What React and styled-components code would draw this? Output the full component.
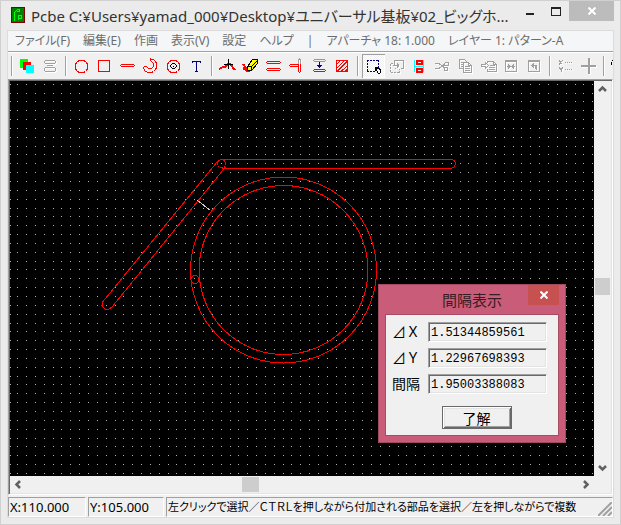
import React from "react";
import styled, { createGlobalStyle, css } from "styled-components";

const UI_FONT = '"Noto Sans", "Noto Sans CJK JP", sans-serif';
const FACE = "#f0f0f0";
const SHADOW = "#a0a0a0";
const DARK = "#696969";
const LIGHT = "#e3e3e3";
const RED = "#ff0000";
const NAVY = "#000080";

const GlobalStyle = createGlobalStyle`
  * { box-sizing: border-box; }
  body { margin: 0; font-family: ${UI_FONT}; color: #000; }
  button { font-family: inherit; border: 0; padding: 0; margin: 0; background: none; color: inherit; }
  svg { display: block; }
`;

const Window = styled.div`
  position: relative;
  display: flex;
  flex-direction: column;
  height: 100vh;
  background: #ebebeb;
  box-shadow: inset 0 0 0 1px #d0d0d0;
  overflow: hidden;
`;

const TitleBar = styled.header`
  display: flex;
  align-items: flex-start;
  height: 31px;
  padding: 1px 7px 0 11px;
`;

const AppIcon = styled.svg`
  flex: none;
  margin-top: 6px;
`;

const Title = styled.h1`
  flex: 1;
  min-width: 0;
  margin: 0 0 0 6px;
  overflow: hidden;
  font-size: 15px;
  font-weight: 400;
  line-height: 30px;
  white-space: nowrap;
  color: #333;
  font-feature-settings: "palt";
`;

const CaptionButton = styled.button`
  display: flex;
  flex: none;
  align-items: center;
  justify-content: center;
  width: ${(p) => (p.$wide ? 45 : 26)}px;
  height: 20px;
  background: ${(p) => (p.$wide ? "#bcbcbc" : "transparent")};
`;

const Client = styled.main`
  display: flex;
  flex: 1;
  flex-direction: column;
  min-height: 0;
  margin: 0 8px 8px;
  background: ${FACE};
  box-shadow: 0 0 0 1px #dcdcdc;
`;

const MenuBar = styled.nav`
  display: flex;
  flex: none;
  gap: 13px;
  height: 20px;
  padding-left: 7px;
  overflow: hidden;
  background: #f5f6f7;
`;

const MenuItem = styled.button`
  flex: none;
  font-size: 12px;
  line-height: 20px;
  white-space: nowrap;
  color: #6d6d6d;
  font-feature-settings: "palt";
`;

const ToolBar = styled.div`
  display: flex;
  flex: none;
  align-items: flex-start;
  height: 28px;
  padding-top: 2px;
  overflow: hidden;
  border-top: 1px solid ${SHADOW};
  box-shadow: inset 0 1px 0 #fff;
`;

const ToolSeparator = styled.span`
  flex: none;
  width: 2px;
  height: 20px;
  margin: 2px 3px 0;
  background: ${SHADOW};
  border-right: 1px solid #fff;
`;

const ToolButton = styled.button`
  flex: none;
  width: 23px;
  height: 24px;
  ${(p) =>
    p.$pressed &&
    css`
      background: repeating-conic-gradient(#fff 0 25%, #f0f0f0 0 50%) 0 0 / 2px 2px;
      box-shadow: inset 1px 1px 0 ${SHADOW}, inset -1px -1px 0 #fff;
    `}
`;

const Viewport = styled.section`
  display: grid;
  flex: 1;
  grid-template: minmax(0, 1fr) 17px / minmax(0, 1fr) 17px;
  min-height: 0;
  border: 1px solid ${SHADOW};
  border-right-color: #fff;
  border-bottom-color: #fff;
  box-shadow: inset 1px 1px 0 ${DARK}, inset -1px -1px 0 ${LIGHT};
  padding: 1px;
`;

const Board = styled.svg`
  width: 100%;
  height: 100%;
  background: #000;
`;

const ScrollTrack = styled.div`
  display: flex;
  flex-direction: ${(p) => (p.$vertical ? "column" : "row")};
  background: ${FACE};
`;

const ScrollButton = styled.button`
  display: flex;
  flex: none;
  align-items: center;
  justify-content: center;
  width: 17px;
  height: 17px;
`;

const ScrollGap = styled.span`
  flex: ${(p) => p.$share} 0 0;
`;

const ScrollThumb = styled.span`
  flex: none;
  width: ${(p) => (p.$vertical ? 15 : 17)}px;
  height: ${(p) => (p.$vertical ? 17 : 15)}px;
  margin: ${(p) => (p.$vertical ? "0 1px" : "1px 0")};
  background: #cdcdcd;
`;

const StatusBar = styled.footer`
  display: flex;
  flex: none;
  gap: 2px;
  height: 22px;
  padding-top: 2px;
`;

const StatusPane = styled.div`
  display: flex;
  flex: ${(p) => (p.$width ? `0 0 ${p.$width}px` : "1 1 0")};
  justify-content: space-between;
  align-items: flex-end;
  min-width: 0;
  overflow: hidden;
  border: 1px solid ${SHADOW};
  border-right-color: #fff;
  border-bottom-color: #fff;
  padding-left: 1px;
`;

const StatusText = styled.span`
  overflow: hidden;
  font-size: ${(p) => (p.$small ? 11 : 13)}px;
  line-height: 18px;
  white-space: nowrap;
  font-feature-settings: "palt";
`;

const Grip = styled.svg`
  flex: none;
`;

const Dialog = styled.section`
  position: absolute;
  left: 378px;
  top: 284px;
  width: 188px;
  padding: 0 6px 6px;
  background: #c95c78;
  border: 1px solid #9f4a60;
`;

const DialogHead = styled.header`
  display: grid;
  grid-template-columns: 31px 1fr 31px;
  height: 29px;
`;

const DialogTitle = styled.h2`
  grid-column: 2;
  margin: 0;
  font-size: 15px;
  font-weight: 400;
  line-height: 31px;
  text-align: center;
  color: #3a1c24;
`;

const DialogClose = styled.button`
  display: flex;
  align-items: center;
  justify-content: center;
  height: 20px;
  background: #c75050;
`;

const DialogBody = styled.form`
  display: grid;
  grid-template-columns: 36px 119px;
  row-gap: 6px;
  padding: 7px 0 6px 6px;
  background: ${FACE};
  border: 1px solid #a84c64;
  font-family: "Noto Sans CJK JP", sans-serif;
`;

const FieldLabel = styled.label`
  font-size: 14px;
  line-height: 18px;
`;

const Field = styled.input`
  width: 119px;
  height: 20px;
  padding: 1px 0 0 2px;
  font: 12px "Liberation Mono", monospace;
  color: #000;
  background: ${FACE};
  border: 1px solid;
  border-color: ${SHADOW} #fff #fff ${SHADOW};
  border-radius: 0;
  outline: 0;
  box-shadow: inset 1px 1px 0 ${DARK}, inset -1px -1px 0 ${LIGHT};
`;

const OkButton = styled.button`
  grid-column: 1 / -1;
  justify-self: center;
  width: 70px;
  height: 23px;
  margin: 6px 0 0 14px;
  font-size: 14px;
  line-height: 18px;
  border: 1px solid ${DARK};
  box-shadow: inset 1px 1px 0 #fff, inset -1px -1px 0 ${DARK}, inset 2px 2px 0 ${LIGHT}, inset -2px -2px 0 ${SHADOW};
`;

const G = ({ c = RED, w = 1, children }) => (
  <>
    {c === SHADOW && (
      <g fill="none" stroke="#fff" strokeWidth={w} transform="translate(1 1)">{children}</g>
    )}
    <g fill="none" stroke={c} strokeWidth={w}>{children}</g>
  </>
);

const ICONS = {
  layers: (
    <>
      <path fill="#0f0" d="M4 4h8v9H4z" />
      <path fill="#f00" d="M7 7h8v8H7z" />
      <path fill="#0ff" d="M10 10h8v8h-8z" />
    </>
  ),
  stack: (
    <G c={SHADOW}>
      <path d="M6.500 5.500h9l1 1v1l-1 1h-9l-1-1v-1zM8 10.500h6M6.500 12.500h9l1 1v2l-1 1h-9l-1-1v-2z" />
    </G>
  ),
  circle: <G><path d="M9.500 5.500h4l2 1 1 1 1 2v4l-1 2-1 1-2 1h-4l-2-1-1-1-1-2v-4l1-2 1-1z" /></G>,
  square: <G><path d="M5.500 5.500h11v11h-11z" /></G>,
  line: <G><path d="M5 9.500h13M5 11.500h13M4 10.500h1M18 10.500h1" /></G>,
  arc: (
    <G>
      <path d="M12.500 4.500h2l2 2 1 2v4l-1 2-2 2-2 1h-3l-3-1-2-3v-1l1-1h2l2 2h3l2-2v-3l-2-2-1-1v-2z" />
    </G>
  ),
  pad: (
    <>
      <G><path d="M9.500 5.500h4l2 1 1 1 1 2v4l-1 2-1 1-2 1h-4l-2-1-1-1-1-2v-4l1-2 1-1z" /></G>
      <G c="#000"><path d="M10.500 8.500h2l2 2v1l-2 2h-2l-2-2v-1zM11 11.500h1" /></G>
    </>
  ),
  text: <G c={NAVY}><path d="M7 6.500h9M7.500 6v2M15.500 6v2M11.500 6v11M10 16.500h3" /></G>,
  cut: (
    <>
      <G w={2}><path d="M3 14l4-2h2l3-3h2l5 6" /></G>
      <G c="#000"><path d="M12.500 4v10M8 9.500h9" /></G>
    </>
  ),
  eraser: (
    <>
      <G w={2}><path d="M4 9l6 8M4 13l4 3" /></G>
      <path fill="#ff0" stroke="#000" d="M13.500 4.500h5v4l-6 7h-4v-4z" />
      <path fill="none" stroke="#000" d="M8.500 11.500h4l6-6M12.500 11.500v4" />
    </>
  ),
  parallel: (
    <G><path d="M5 6.500h13M5 8.500h13M5 13.500h13M5 15.500h13M4 7.500h1M18 7.500h1M4 14.500h1M18 14.500h1" /></G>
  ),
  join: (
    <>
      <G c={SHADOW}><path d="M13.500 9V5l1-1 1 1v4" /></G>
      <G><path d="M5 9.500h8.500v7l1 1 1-1v-8M5 11.500h8M4 10.500h1" /></G>
    </>
  ),
  gap: (
    <>
      <G c="#0f0"><path d="M6 4.500h11M6 6.500h11M5 5.500h1M17 5.500h1" /></G>
      <G c={NAVY}><path d="M11.500 7v6M9 10.500h5M10 11.500h3" /></G>
      <G><path d="M6 14.500h11M6 16.500h11M5 15.500h1M17 15.500h1" /></G>
    </>
  ),
  hatch: (
    <G><path d="M5.500 5.500h11v11h-11zM6 9l3-3M6 13l7-7M6 16.500L16.500 6M10 16.500l6.500-6M14 16.500l2-2" /></G>
  ),
  select: (
    <>
      <G c={NAVY}><path strokeDasharray="2 1" d="M5 5.500h12M5 16.500h8M5.500 5v12M16.500 5v7" /></G>
      <path fill="#fff" stroke="#000" d="M14.500 13.500h3l1 2v2l-1 1h-1l-2-3z" />
      <path fill="#000" d="M13 12h4v1h-3v3h-1z" />
    </>
  ),
  move: (
    <G c={SHADOW}>
      <path d="M9.500 10V5.500h9v8h-3M11 13.500h-1" />
      <path strokeDasharray="2 1" d="M5.500 8.500h4M5.500 8.500v9h9v-4" />
      <path d="M8 10.500h6M12.500 8v5M13.500 9v3" />
    </G>
  ),
  align: (
    <>
      <G c="#0ff"><path d="M6.500 5v12M15.500 5v12M7 11.500h8" /></G>
      <G w={2}><path d="M9 6h5v3H9zM9 14h5v3H9z" /></G>
    </>
  ),
  scissors: (
    <G c={SHADOW}>
      <path d="M4 8.500h4l5 4M4 13.500h4l5-4M14.500 7.500h3v3h-4v-2zM13.500 12.500h3v3h-3z" />
    </G>
  ),
  copy: (
    <G c={SHADOW}>
      <path d="M9 13.500H5.500v-9h5l2 2v1M7 7.500h3M7 9.500h2M7 11.500h2M9.500 7.500h5l3 3v7h-8zM14.500 7.500v3h3M11 11.500h5M11 13.500h5M11 15.500h5" />
    </G>
  ),
  paste: (
    <G c={SHADOW}>
      <path d="M4.500 9.500h4v-2l3 3-3 3v-2h-4zM10.500 8V6.500h6l3 3v7h-9v-3M16.500 6.500v3h3M13 10.500h5M12 12.500h6M12 14.500h6" />
    </G>
  ),
  width: (
    <G c={SHADOW}>
      <path d="M5.500 5.500h11v11h-11zM6 6.500h10M7 11.500h8M8.500 9v5M13.500 9v5M9.500 10v3M12.500 10v3" />
    </G>
  ),
  undo: (
    <G c={SHADOW}>
      <path d="M5.500 5.500h11v11h-11zM6 6.500h10M8 10.500h5.500v4M9.500 9v3M10.500 8v5M12.500 10v4" />
    </G>
  ),
  coords: (
    <G c={SHADOW}>
      <path d="M5 5.500l3.500 4M8.500 5.500l-3.500 4M5 12.500l2 2 2-2M7 14v3" />
      <path strokeDasharray="1 1" d="M11 7.500h8M11 14.500h8" />
    </G>
  ),
  cross: <G c={SHADOW} w={2}><path d="M4 11h15M12 3v16" /></G>,
  magnify: <G c="#000"><path strokeDasharray="3 1" d="M6.500 4.500l-3 2v3l3 2" /></G>,
};

const Icon = ({ name }) => (
  <svg width="23" height="22" shapeRendering="crispEdges" aria-hidden="true">{ICONS[name]}</svg>
);

const TOOL_GROUPS = [
  ["layers", "stack"],
  ["circle", "square", "line", "arc", "pad", "text"],
  ["cut", "eraser", "parallel", "join", "gap", "hatch"],
  ["select", "move", "align", "scissors", "copy", "paste", "width", "undo"],
  ["coords", "cross"],
  ["magnify"],
];

const MENU = [
  "ファイル(F)", "編集(E)", "作画", "表示(V)", "設定", "ヘルプ", "|",
  "アパーチャ 18: 1.000", "レイヤー 1: パターン-A",
];

const FIELDS = [
  ["dx", "⊿Ｘ", "1.51344859561"],
  ["dy", "⊿Ｙ", "1.22967698393"],
  ["gap", "間隔", "1.95003388083"],
];

const GRID_STEP = 8.846;
const gridLines = (start, count) =>
  Array.from({ length: count }, (_, i) => Math.max(0, Math.floor(start + i * GRID_STEP)));
const GRID_X = gridLines(-1.1, 160);
const GRID_PATH = gridLines(3.2, 110)
  .map((y) => GRID_X.map((x) => `M${x} ${y}h1v1h-1z`).join(""))
  .join("");

const CHEVRONS = {
  up: "M5 10l3.500-3.500L12 10",
  down: "M5 7l3.500 3.500L12 7",
  left: "M10 5L6.500 8.500 10 12",
  right: "M7 5l3.500 3.500L7 12",
};

const Scroll = ({ dir }) => (
  <ScrollButton type="button" aria-label={`Scroll ${dir}`}>
    <svg width="17" height="17"><path d={CHEVRONS[dir]} fill="none" stroke="#606060" strokeWidth="2.500" /></svg>
  </ScrollButton>
);

const Drawing = () => (
  <Board shapeRendering="crispEdges" role="img" aria-label="PCB pattern">
    <path d={GRID_PATH} fill="#b4b4b4" />
    <g fill="none" stroke={RED}>
      <path d="M212 78.500H441.500l3 1 1 3-1 3-3 2H212" />
      <path d="M207.500 80.500L93 220.500l-1 4 3 3.500 4 0 3-2L215.500 86" />
      <circle cx="211.500" cy="82.500" r="4" />
      <circle cx="273.500" cy="189" r="93" />
      <circle cx="273.500" cy="189" r="84.500" />
      <circle cx="185" cy="198.500" r="4" />
    </g>
    <path d="M187.500 119.500l13 10" stroke="#ccc" />
  </Board>
);

export default function App() {
  return (
    <Window>
      <GlobalStyle />
      <TitleBar>
        <AppIcon width="14" height="16" shapeRendering="crispEdges" aria-hidden="true">
          <path fill="#008000" stroke="#800000" d="M.5.5h13v15H.5z" />
          <path fill="none" stroke="#0f0" d="M3.500 14V5M4 4.500h1M5 3.500h1M6 2.500h2v2h-2M7.500 13V8.500h3v3h-3" />
        </AppIcon>
        <Title>Pcbe C:¥Users¥yamad_000¥Desktop¥ユニバーサル基板¥02_ビッグホ...</Title>
        <CaptionButton type="button" aria-label="Minimize">
          <svg width="8" height="11"><path fill="#222" d="M0 7h8v2H0z" /></svg>
        </CaptionButton>
        <CaptionButton type="button" aria-label="Maximize">
          <svg width="10" height="9"><path fill="#222" fillRule="evenodd" d="M0 0h10v9H0zM1 2v6h8V2z" /></svg>
        </CaptionButton>
        <CaptionButton type="button" $wide aria-label="Close">
          <svg width="8" height="8"><path stroke="#fff" strokeWidth="2" d="M.5.5l7 7M7.500.5l-7 7" /></svg>
        </CaptionButton>
      </TitleBar>
      <Client>
        <MenuBar>
          {MENU.map((m) => <MenuItem type="button" key={m}>{m}</MenuItem>)}
        </MenuBar>
        <ToolBar role="toolbar">
          {TOOL_GROUPS.map((group) => (
            <React.Fragment key={group[0]}>
              <ToolSeparator />
              {group.map((name) => (
                <ToolButton type="button" key={name} aria-label={name} $pressed={name === "select"}>
                  <Icon name={name} />
                </ToolButton>
              ))}
            </React.Fragment>
          ))}
        </ToolBar>
        <Viewport>
          <Drawing />
          <ScrollTrack $vertical>
            <Scroll dir="up" />
            <ScrollGap $share={180} />
            <ScrollThumb $vertical />
            <ScrollGap $share={164} />
            <Scroll dir="down" />
          </ScrollTrack>
          <ScrollTrack>
            <Scroll dir="left" />
            <ScrollGap $share={215} />
            <ScrollThumb />
            <ScrollGap $share={318} />
            <Scroll dir="right" />
          </ScrollTrack>
        </Viewport>
        <StatusBar>
          <StatusPane $width={78}><StatusText>X:110.000</StatusText></StatusPane>
          <StatusPane $width={76}><StatusText>Y:105.000</StatusText></StatusPane>
          <StatusPane>
            <StatusText $small>左クリックで選択／ＣＴＲＬを押しながら付加される部品を選択／左を押しながらで複数</StatusText>
            <Grip width="14" height="14" aria-hidden="true">
              <path stroke={SHADOW} strokeWidth="2" d="M0 14L14 0M5 14l9-9M10 14l4-4" />
            </Grip>
          </StatusPane>
        </StatusBar>
      </Client>
      <Dialog role="dialog" aria-labelledby="gap-title">
        <DialogHead>
          <DialogTitle id="gap-title">間隔表示</DialogTitle>
          <DialogClose type="button" aria-label="Close">
            <svg width="8" height="8"><path stroke="#fff" strokeWidth="2" d="M.5.5l7 7M7.500.5l-7 7" /></svg>
          </DialogClose>
        </DialogHead>
        <DialogBody>
          {FIELDS.map(([id, label, value]) => (
            <React.Fragment key={id}>
              <FieldLabel htmlFor={id}>{label}</FieldLabel>
              <Field id={id} readOnly value={value} />
            </React.Fragment>
          ))}
          <OkButton type="button">了解</OkButton>
        </DialogBody>
      </Dialog>
    </Window>
  );
}
